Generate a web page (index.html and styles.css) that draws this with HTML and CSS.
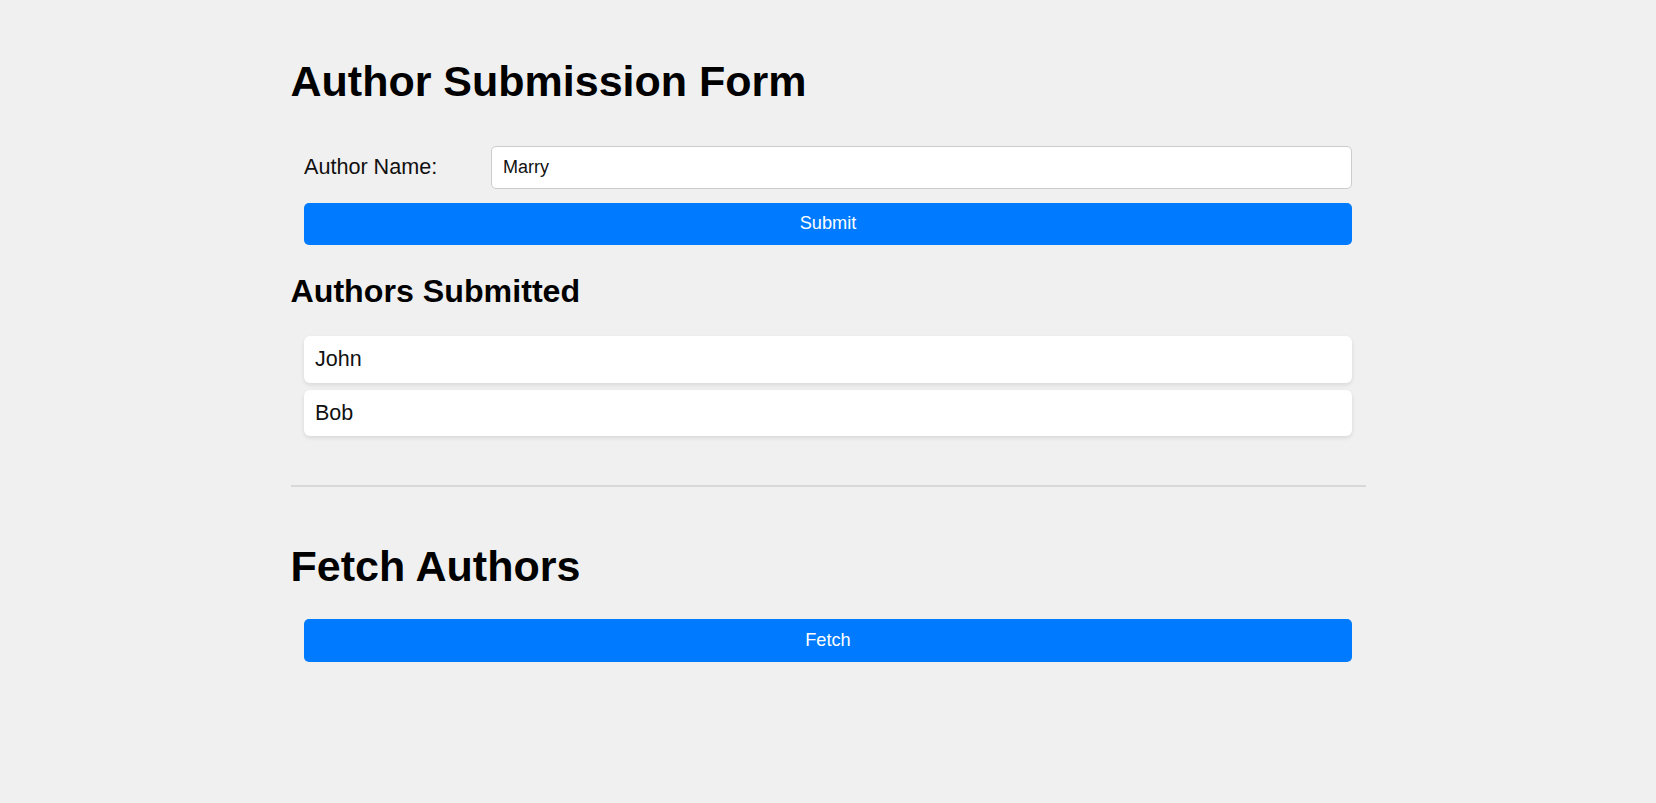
FILE: index.html
```html
<!DOCTYPE html>
<html lang="en">
<head>
<meta charset="utf-8">
<title>Author Submission Form</title>
<link rel="stylesheet" href="styles.css">
</head>
<body>
<div class="container">
  <h1 class="title">Author Submission Form</h1>
  <form class="form">
    <div class="row">
      <label class="label" for="name">Author Name:</label>
      <input class="input" id="name" type="text" value="Marry">
    </div>
    <button class="btn btn-submit" type="button">Submit</button>
  </form>
  <h2 class="subtitle">Authors Submitted</h2>
  <ul class="list">
    <li class="item">John</li>
    <li class="item">Bob</li>
  </ul>
  <hr class="divider">
  <h1 class="title title-fetch">Fetch Authors</h1>
  <div class="fetch">
    <button class="btn" type="button">Fetch</button>
  </div>
</div>
</body>
</html>
```
FILE: styles.css
```css
html, body {
  margin: 0;
  padding: 0;
}
body {
  background: #f0f0f0;
  font-family: "Liberation Sans", Arial, sans-serif;
  color: #000;
}
.container {
  width: 1075px;
  margin: 0 auto;
  padding-top: 56px;
}
.title {
  margin: 0;
  font-size: 43px;
  line-height: 51px;
  font-weight: bold;
  color: #000;
}
.form {
  margin: 39px 0 0;
  padding: 0 13.5px;
}
.row {
  display: flex;
  align-items: center;
}
.label {
  flex: none;
  width: 187px;
  font-size: 21.6px;
  color: #111;
}
.input {
  flex: 1;
  min-width: 0;
  box-sizing: border-box;
  height: 42.5px;
  margin: 0;
  padding: 0 11px;
  border: 1px solid #cccccc;
  border-radius: 5px;
  background: #fff;
  font-family: "Liberation Sans", Arial, sans-serif;
  font-size: 18px;
  color: #111;
}
.btn {
  display: block;
  box-sizing: border-box;
  width: 100%;
  height: 42.5px;
  margin: 0;
  padding: 0;
  border: none;
  border-radius: 5px;
  background: #007bff;
  color: #fff;
  font-family: "Liberation Sans", Arial, sans-serif;
  font-size: 18.2px;
}
.btn-submit {
  margin-top: 14px;
}
.subtitle {
  margin: 27px 0 26px;
  font-size: 32.2px;
  line-height: 38px;
  font-weight: bold;
}
.list {
  list-style: none;
  margin: 0;
  padding: 0 13.5px;
  display: flex;
  flex-direction: column;
  gap: 7px;
}
.item {
  height: 46.5px;
  line-height: 46.5px;
  padding: 0 11px;
  background: #fff;
  border-radius: 6px;
  box-shadow: 0 2px 4px rgba(0, 0, 0, 0.1);
  font-size: 21.5px;
  color: #111;
}
.divider {
  border: none;
  height: 2px;
  margin: 48.5px 0 0;
  background: #d8d8d8;
}
.title-fetch {
  margin-top: 54.5px;
}
.fetch {
  margin-top: 27px;
  padding: 0 13.5px;
}
```
